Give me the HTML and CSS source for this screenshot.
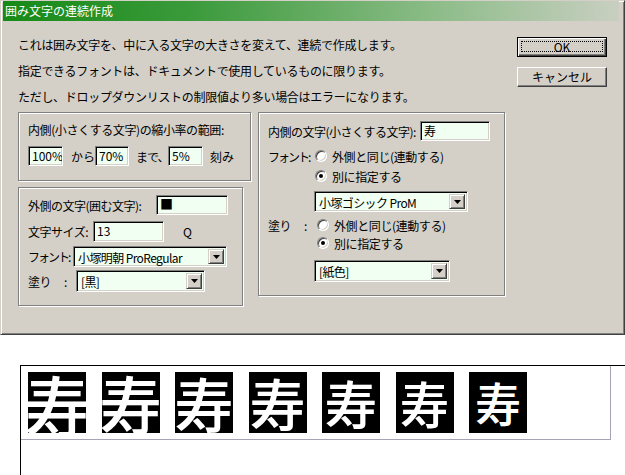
FILE: index.html
```
<!DOCTYPE html>
<html lang="ja">

<head>
    <meta charset="UTF-8">
    <meta name="viewport" content="width=device-width, initial-scale=1.0">
    <title>囲み文字の連続作成</title>
    <link rel="stylesheet" href="styles.css">
</head>

<body>

<div class="dialog">
    <div class="titlebar">囲み文字の連続作成</div>

    <div class="dialog-body">
        <div class="main">
            <!-- start intro -->
            <div class="intro">
                <div>これは囲み文字を、中に入る文字の大きさを変えて、連続で作成します。</div>
                <div>指定できるフォントは、ドキュメントで使用しているものに限ります。</div>
                <div>ただし、ドロップダウンリストの制限値より多い場合はエラーになります。</div>
            </div>
            <!-- end intro -->

            <div class="groups">
                <div class="col-left">
                    <!-- start range -->
                    <div class="group range">
                        <div class="label-line">内側(小さくする文字)の縮小率の範囲:</div>
                        <div class="row range-row">
                            <div class="field w35">100%</div>
                            <span class="sep sep-kara">から</span>
                            <div class="field w34">70%</div>
                            <span class="sep sep-made">まで、</span>
                            <div class="field w35">5%</div>
                            <span class="sep sep-kizami">刻み</span>
                        </div>
                    </div>
                    <!-- end range -->

                    <!-- start outer -->
                    <div class="group outer">
                        <div class="row">
                            <span class="lbl lbl-outer">外側の文字(囲む文字):</span>
                            <div class="field outer-char"><span class="blk">■</span></div>
                        </div>
                        <div class="row row-size">
                            <span class="lbl lbl-size">文字サイズ:</span>
                            <div class="field size-field">13</div>
                            <span class="unit">Q</span>
                        </div>
                        <div class="row row-font">
                            <span class="lbl lbl-font">フォント:</span>
                            <div class="select sel-font">
                                <span class="value">小塚明朝 ProRegular</span>
                                <span class="drop"><svg width="7" height="4"><path d="M0 0h7L3.5 4z"/></svg></span>
                            </div>
                        </div>
                        <div class="row row-paint">
                            <span class="lbl lbl-paint">塗り<span class="colon">:</span></span>
                            <div class="select sel-paint">
                                <span class="value">[黒]</span>
                                <span class="drop"><svg width="7" height="4"><path d="M0 0h7L3.5 4z"/></svg></span>
                            </div>
                        </div>
                    </div>
                    <!-- end outer -->
                </div>

                <!-- start inner -->
                <div class="group inner">
                    <div class="row">
                        <span class="lbl lbl-inner">内側の文字(小さくする文字):</span>
                        <div class="field inner-char">寿</div>
                    </div>

                    <div class="radios font-radios">
                        <div class="radio-row">
                            <span class="lbl lbl-rfont">フォント:</span>
                            <span class="radio"></span>
                            <span class="radio-text">外側と同じ(連動する)</span>
                        </div>
                        <div class="radio-row indent">
                            <span class="radio checked"></span>
                            <span class="radio-text">別に指定する</span>
                        </div>
                    </div>
                    <div class="select sel-rfont">
                        <span class="value">小塚ゴシック ProM</span>
                        <span class="drop"><svg width="7" height="4"><path d="M0 0h7L3.5 4z"/></svg></span>
                    </div>

                    <div class="radios paint-radios">
                        <div class="radio-row">
                            <span class="lbl lbl-rpaint">塗り<span class="colon">:</span></span>
                            <span class="radio"></span>
                            <span class="radio-text">外側と同じ(連動する)</span>
                        </div>
                        <div class="radio-row indent-paint">
                            <span class="radio checked"></span>
                            <span class="radio-text">別に指定する</span>
                        </div>
                    </div>
                    <div class="select sel-rpaint">
                        <span class="value">[紙色]</span>
                        <span class="drop"><svg width="7" height="4"><path d="M0 0h7L3.5 4z"/></svg></span>
                    </div>
                </div>
                <!-- end inner -->
            </div>
        </div>

        <div class="buttons">
            <div class="btn default"><span class="focus"></span>OK</div>
            <div class="btn">キャンセル</div>
        </div>
    </div>
</div>

<!-- preview -->
<div class="canvas">
    <div class="frame">
        <div class="sq" style="font-size:66px">寿</div>
        <div class="sq" style="font-size:62.7px">寿</div>
        <div class="sq" style="font-size:59.4px">寿</div>
        <div class="sq" style="font-size:56.1px">寿</div>
        <div class="sq" style="font-size:52.8px">寿</div>
        <div class="sq" style="font-size:49.5px">寿</div>
        <div class="sq" style="font-size:46.2px">寿</div>
    </div>
</div>

</body>

</html>
```

FILE: styles.css
```
* {
  box-sizing: border-box;
}

body {
  margin: 0;
  background: #fff;
  font-family: "Noto Sans CJK JP", "Noto Sans", sans-serif;
  font-size: 12px;
  color: #000;
  height: 475px;
  overflow: hidden;
}

.dialog {
  width: 625px;
  height: 335px;
  background: #d4d0c8;
  border: 1px solid;
  border-color: #d4d0c8 #404040 #404040 #d4d0c8;
  box-shadow: inset 1px 1px 0 #fff, inset -1px -1px 0 #808080;
  padding: 0 2px;
}

.titlebar {
  height: 20px;
  line-height: 20px;
  margin-right: 3px;
  padding-left: 2px;
  color: #fff;
  font-size: 12px;
  background: linear-gradient(to right, #168a16 0%, #3a9a3a 30%, #8cbc88 70%, #c9cfc1 100%);
}

.dialog-body {
  display: flex;
  padding: 11px 15px 0 15px;
}

.main {
  width: 487px;
}

.intro div {
  line-height: 26px;
  height: 26px;
  white-space: nowrap;
  letter-spacing: -0.3px;
}

.groups {
  display: flex;
  gap: 7px;
  margin-top: 2px;
}

.col-left {
  width: 233px;
}

.group {
  border: 1px solid #808080;
  box-shadow: 1px 1px 0 #fff, inset 1px 1px 0 #fff;
}

.range {
  width: 233px;
  height: 69px;
  padding: 7px 9px;
}

.label-line {
  line-height: 20px;
  white-space: nowrap;
  letter-spacing: -0.4px;
}

.row {
  display: flex;
  align-items: center;
  white-space: nowrap;
}

.range-row {
  margin-top: 6px;
}

.field {
  height: 20px;
  background: #f0fff2;
  border: 1px solid;
  border-color: #808080 #fff #fff #808080;
  box-shadow: inset 1px 1px 0 #000, inset -1px -1px 0 #d4d0c8;
  padding: 2px 3px 0 3px;
  line-height: 14px;
  font-size: 12px;
  overflow: hidden;
}

.w35 { width: 35px; }
.w34 { width: 34px; }

.sep {
  display: inline-block;
}

.sep-kara { width: 32px; padding-left: 8px; }
.sep-made { width: 39px; padding-left: 7px; letter-spacing: -1px; }
.sep-kizami { padding-left: 7px; }

.outer {
  width: 225px;
  height: 119px;
  margin-top: 6px;
  padding: 7px 9px;
}

.lbl {
  display: inline-block;
  flex: none;
  white-space: nowrap;
  letter-spacing: -0.5px;
}

.lbl-outer { width: 128px; }
.lbl-size { width: 65px; }
.lbl-font { width: 45px; letter-spacing: -2px; }
.lbl-paint { width: 48px; }
.lbl-inner { width: 152px; }
.lbl-rfont { width: 47px; letter-spacing: -2px; }
.lbl-rpaint { width: 49px; }

.colon {
  margin-left: 13px;
}

.outer-char {
  width: 72px;
  padding-top: 1px;
}

.blk {
  font-size: 13px;
  line-height: 14px;
}

.row-size { margin-top: 6px; }
.row-font { margin-top: 4px; }
.row-paint { margin-top: 3px; }

.size-field {
  width: 71px;
  height: 21px;
}

.unit {
  margin-left: 19px;
}

/* select boxes */
.select {
  display: flex;
  background: #f0fff2;
  border: 1px solid;
  border-color: #808080 #fff #fff #808080;
  box-shadow: inset 1px 1px 0 #000, inset -1px -1px 0 #d4d0c8;
  padding: 2px;
}

.select .value {
  flex: 1;
  padding-left: 2px;
  line-height: 17px;
  white-space: nowrap;
  letter-spacing: -0.6px;
}

.select .drop {
  width: 16px;
  flex: none;
  background: #d4d0c8;
  border: 1px solid;
  border-color: #d4d0c8 #404040 #404040 #d4d0c8;
  box-shadow: inset 1px 1px 0 #fff, inset -1px -1px 0 #808080;
  display: flex;
  align-items: center;
  justify-content: center;
}

.sel-font { width: 154px; height: 21px; }
.sel-paint { width: 129px; height: 22px; }
.sel-rfont { width: 154px; height: 21px; margin: 5px 0 0 46px; }
.sel-rpaint { width: 136px; height: 22px; margin: 8px 0 0 46px; }

/* inner box */
.inner {
  width: 247px;
  height: 184px;
  padding: 8px 9px;
}

.inner-char {
  width: 70px;
  padding-top: 2px;
}

.font-radios {
  margin-top: 5px;
}

.paint-radios {
  margin-top: 4px;
}

.radio-row {
  display: flex;
  align-items: center;
  height: 20px;
  white-space: nowrap;
}

.paint-radios .radio-row {
  height: 18px;
}

.indent { padding-left: 47px; }
.indent-paint { padding-left: 49px; }

.radio {
  position: relative;
  width: 12px;
  height: 12px;
  flex: none;
  border-radius: 50%;
  background: #fff;
  border: 1px solid;
  border-color: #808080 #fff #fff #808080;
  box-shadow: inset 1px 1px 0 #404040, inset -1px -1px 0 #d4d0c8;
}

.radio.checked::after {
  content: "";
  position: absolute;
  left: 3px;
  top: 3px;
  width: 4px;
  height: 4px;
  border-radius: 50%;
  background: #000;
}

.radio-text {
  margin-left: 5px;
  letter-spacing: -0.4px;
}

/* buttons */
.buttons {
  margin-left: auto;
  margin-top: 5px;
  width: 90px;
}

.btn {
  position: relative;
  width: 90px;
  height: 20px;
  margin-bottom: 10px;
  background: #d4d0c8;
  border: 1px solid;
  border-color: #fff #404040 #404040 #fff;
  box-shadow: inset -1px -1px 0 #808080;
  text-align: center;
  line-height: 18px;
  font-size: 12px;
}

.btn.default {
  border: 1px solid #000;
  box-shadow: inset 1px 1px 0 #fff, inset -1px -1px 0 #404040, inset -2px -2px 0 #808080;
}

.focus {
  position: absolute;
  left: 3px;
  right: 3px;
  top: 3px;
  bottom: 4px;
  border: 1px dotted #000;
}

/* preview */
.canvas {
  margin: 30px 0 0 20px;
  height: 110px;
  border-top: 1px solid #000;
  border-left: 1px solid #000;
}

.frame {
  display: flex;
  gap: 15.5px;
  width: 590px;
  height: 74px;
  padding: 6px 0 0 7px;
  border-right: 1px solid #a9a2b6;
  border-bottom: 1px solid #a9a2b6;
}

.sq {
  width: 58px;
  height: 61px;
  flex: none;
  background: #000;
  color: #fff;
  display: flex;
  align-items: center;
  justify-content: center;
  line-height: 1;
  font-weight: 500;
}
```
